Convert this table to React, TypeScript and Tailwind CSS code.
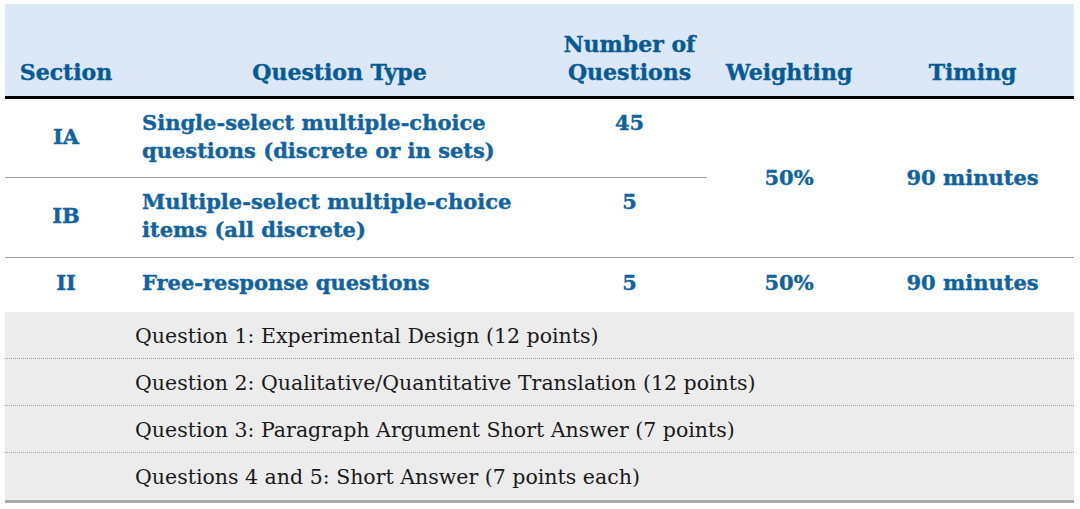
const head = "text-[#075a96]";
const body = "text-[#11639f]";

const gridCols = "grid grid-cols-[122px_425px_155px_164px_203px]";
const heavy = "[-webkit-text-stroke:0.4px_currentColor]";

const freeResponse = [
  "Question 1: Experimental Design (12 points)",
  "Question 2: Qualitative/Quantitative Translation (12 points)",
  "Question 3: Paragraph Argument Short Answer (7 points)",
  "Questions 4 and 5: Short Answer (7 points each)",
];

export default function App() {
  return (
    <div className="w-[1080px] h-[509px] bg-white pt-[4px] px-[5px] overflow-hidden" style={{ fontFamily: '"DejaVu Serif", serif' }}>
      <div className="w-[1069px]">
        {/* header */}
        <div className={`${gridCols} h-[95px] bg-[#dce8f7] border-b-[3px] border-black font-bold text-[22px] leading-[28px] ${heavy} ${head}`}>
          <div className="flex items-end justify-center pb-[10px]">Section</div>
          <div className="flex items-end justify-center pb-[10px]">Question Type</div>
          <div className="flex items-end justify-center pb-[10px] text-center">Number of<br />Questions</div>
          <div className="flex items-end justify-center pb-[10px]">Weighting</div>
          <div className="flex items-end justify-center pb-[10px]">Timing</div>
        </div>

        {/* section I */}
        <div className={`${gridCols} grid-rows-[79px_79px] border-b border-[#a3a3a3] font-bold text-[21px] leading-[28px] ${heavy} ${body}`}>
          <div className="flex items-center justify-center pb-[3px] border-b border-[#a3a3a3]">IA</div>
          <div className="pl-[15px] pt-[10px] border-b border-[#a3a3a3]">
            Single-select multiple-choice<br />questions (discrete or in sets)
          </div>
          <div className="text-center pt-[10px] border-b border-[#a3a3a3]">45</div>
          <div className="row-span-2 col-start-4 row-start-1 flex items-center justify-center">50%</div>
          <div className="row-span-2 col-start-5 row-start-1 flex items-center justify-center">90 minutes</div>
          <div className="flex items-center justify-center pb-[3px]">IB</div>
          <div className="pl-[15px] pt-[10px]">
            Multiple-select multiple-choice<br />items (all discrete)
          </div>
          <div className="text-center pt-[10px]">5</div>
        </div>

        {/* section II */}
        <div className={`${gridCols} h-[54px] pb-[4px] items-center font-bold text-[21px] leading-[28px] ${heavy} ${body}`}>
          <div className="text-center">II</div>
          <div className="pl-[15px]">Free-response questions</div>
          <div className="text-center">5</div>
          <div className="text-center">50%</div>
          <div className="text-center">90 minutes</div>
        </div>

        <div className="bg-[#ececec] border-b-[3px] border-[#a9a9a9] text-[20.5px] text-[#1a1a1a]">
          {freeResponse.map((q, i) => (
            <div
              key={q}
              className={`h-[47px] flex items-center pl-[130px] pt-[2px] ${i < freeResponse.length - 1 ? "border-b border-dotted border-[#a0a0a0]" : ""}`}
            >
              {q}
            </div>
          ))}
        </div>
      </div>
    </div>
  );
}
